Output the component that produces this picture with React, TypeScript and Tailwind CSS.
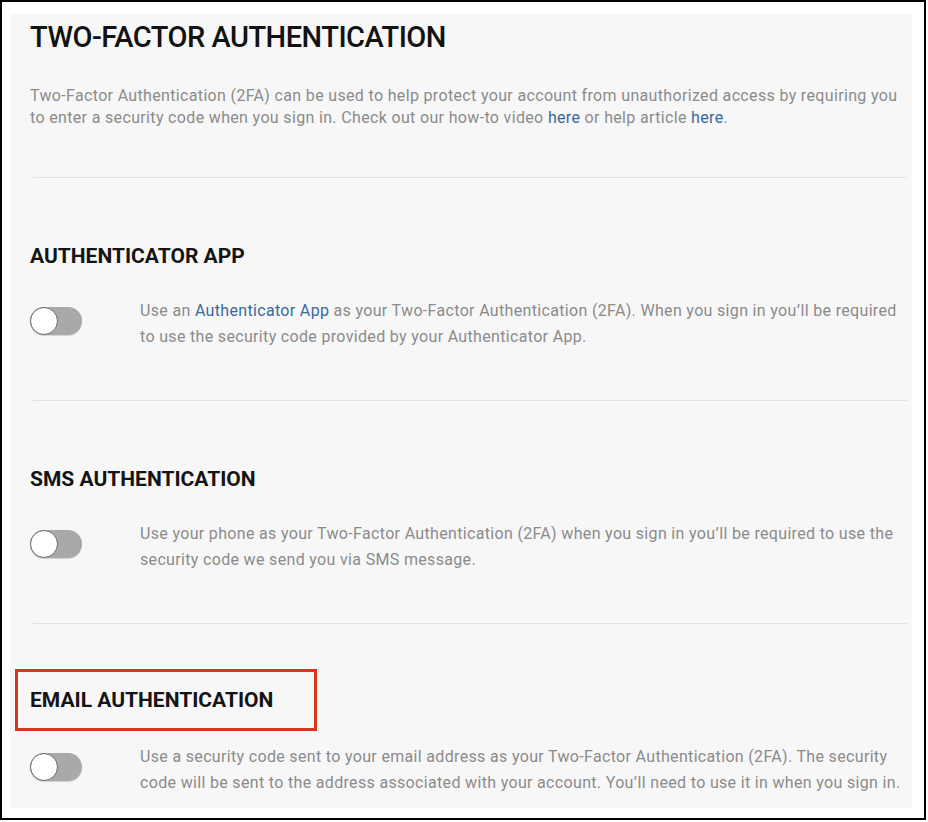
import React from "react";

const Toggle = () => (
  <div className="mt-[9px] flex h-[28px] w-[52px] shrink-0 items-center rounded-full bg-[#a9a9a9] shadow-[0_1px_1px_rgba(0,0,0,0.15)]">
    <div className="h-[28px] w-[28px] rounded-full border-[1.5px] border-[#6c6c6c] bg-white" />
  </div>
);

const Divider = () => <div className="ml-[3px] h-px w-[874px] bg-[#e3e3e3]" />;

const Link = ({ children }: { children: React.ReactNode }) => (
  <span className="text-[#3768a0]">{children}</span>
);

const Option = ({
  title,
  first,
  second,
  boxed,
}: {
  title: string;
  first: React.ReactNode;
  second: React.ReactNode;
  boxed?: boolean;
}) => (
  <div>
    <div className="mt-[66px]">
      {boxed ? (
        <div className="-mt-[21px] -mb-[17px] -ml-[15px] w-[302px] border-[3px] border-[#d8391c] py-[16px] pl-[12px]">
          <h2 className="text-[21px] leading-[24px] font-bold text-[#141414]">{title}</h2>
        </div>
      ) : (
        <h2 className="text-[21px] leading-[24px] font-bold text-[#141414]">{title}</h2>
      )}
    </div>
    <div className="mt-[30px] flex items-start">
      <Toggle />
      <p className="ml-[58px] text-[16px] leading-[26px] tracking-[0.33px] whitespace-nowrap text-[#8b8b8b]">
        {first}
        <br />
        {second}
      </p>
    </div>
  </div>
);

export default function App() {
  return (
    <div className="h-[822px] w-[928px] bg-white font-['Roboto',sans-serif]">
      <div className="h-[820px] w-[926px] border-2 border-black bg-white pt-[12px] pl-[8px]">
        <div className="h-[794px] w-[902px] bg-[#f7f7f7] pt-[5px] pl-[20px]">
          <h1 className="text-[29px] leading-[36px] font-medium tracking-[-0.5px] text-[#121212]">
            TWO-FACTOR AUTHENTICATION
          </h1>
          <p className="mt-[30px] text-[16px] leading-[22px] tracking-[0.34px] whitespace-nowrap text-[#8b8b8b]">
            Two-Factor Authentication (2FA) can be used to help protect your account from unauthorized access by requiring you
            <br />
            to enter a security code when you sign in. Check out our how-to video <Link>here</Link> or help article{" "}
            <Link>here</Link>.
          </p>
          <div className="mt-[48px]">
            <Divider />
          </div>
          <div className="w-[874px]">
            <Option
              title="AUTHENTICATOR APP"
              first={
                <>
                  Use an <Link>Authenticator App</Link> as your Two-Factor Authentication (2FA). When you sign in you’ll be
                  required
                </>
              }
              second="to use the security code provided by your Authenticator App."
            />
            <div className="mt-[50px]">
              <Divider />
            </div>
            <Option
              title="SMS AUTHENTICATION"
              first="Use your phone as your Two-Factor Authentication (2FA) when you sign in you’ll be required to use the"
              second="security code we send you via SMS message."
            />
            <div className="mt-[50px]">
              <Divider />
            </div>
            <Option
              boxed
              title="EMAIL AUTHENTICATION"
              first="Use a security code sent to your email address as your Two-Factor Authentication (2FA). The security"
              second="code will be sent to the address associated with your account. You’ll need to use it in when you sign in."
            />
          </div>
        </div>
      </div>
    </div>
  );
}
